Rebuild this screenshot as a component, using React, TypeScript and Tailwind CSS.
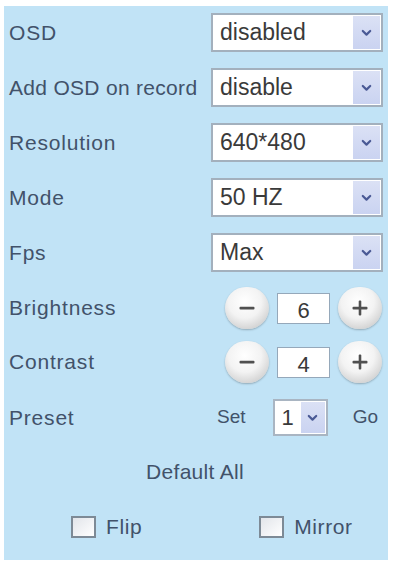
import React from 'react';

const font = { fontFamily: '"Liberation Sans", Arial, sans-serif' };

const Chevron = () => (
  <svg width="11" height="8" viewBox="0 0 11 8" fill="none">
    <path d="M1.8 2 L5.5 5.6 L9.2 2" stroke="#4a5a95" strokeWidth="2.2" strokeLinecap="round" strokeLinejoin="round" />
  </svg>
);

const Select = ({ value }: { value: string }) => (
  <div className="flex h-[39px] w-[172px] border-2 border-[#a3b0bd] bg-white">
    <div className="flex flex-1 items-center pl-[7px] text-[23px] text-[#3a3a3a]">{value}</div>
    <div className="my-[1px] mr-[1px] flex w-[27px] items-center justify-center bg-gradient-to-b from-[#dbe1f5] to-[#cad3f1]">
      <Chevron />
    </div>
  </div>
);

const RoundButton = ({ sign }: { sign: '-' | '+' }) => (
  <div className="flex h-[42px] w-[44px] items-center justify-center rounded-full bg-[radial-gradient(circle_at_45%_35%,#ffffff_0%,#f3f3f3_45%,#d2d2d2_78%,#b4b4b4_100%)] shadow-[0_1px_2px_rgba(0,0,0,0.25)]">
    <svg width="20" height="20" viewBox="0 0 20 20">
      <rect x="2.5" y="8.8" width="15" height="2.6" rx="1" fill="#505050" />
      {sign === '+' && <rect x="8.7" y="2.5" width="2.6" height="15" rx="1" fill="#505050" />}
    </svg>
  </div>
);

const Stepper = ({ value }: { value: string }) => (
  <div className="flex h-[42px] items-center gap-[8px]">
    <RoundButton sign="-" />
    <div className="flex h-[31px] w-[53px] items-end justify-center border border-[#95a8ba] bg-white pb-[1px] text-[22px] leading-none text-[#3a3a3a]">
      {value}
    </div>
    <RoundButton sign="+" />
  </div>
);

const Label = ({ children, wide = true }: { children: React.ReactNode; wide?: boolean }) => (
  <span className={`text-[21px] text-[#42526a] ${wide ? 'tracking-[0.8px]' : 'tracking-[0.3px]'}`}>{children}</span>
);

const Checkbox = ({ label }: { label: string }) => (
  <div className="flex items-center gap-[10px]">
    <div className="h-[22px] w-[25px] border-2 border-[#7d8a96] bg-gradient-to-br from-[#e2e5ea] to-[#ffffff]" />
    <span className="text-[21px] tracking-[0.6px] text-[#42526a]">{label}</span>
  </div>
);

export default function App() {
  const selects: [string, string, boolean][] = [
    ['OSD', 'disabled', true],
    ['Add OSD on record', 'disable', false],
    ['Resolution', '640*480', true],
    ['Mode', '50 HZ', true],
    ['Fps', 'Max', true],
  ];

  return (
    <div className="min-h-[565px] bg-white pt-[6px]" style={font}>
      <div className="ml-[4px] w-[384px] bg-[#c1e3f6] pb-[22px] pl-[5px] pr-[5px] pt-[7px]">
        <div className="flex flex-col gap-[16px]">
          {selects.map(([label, value, wide]) => (
            <div key={label} className="flex h-[39px] items-center justify-between">
              <Label wide={wide}>{label}</Label>
              <Select value={value} />
            </div>
          ))}
        </div>

        <div className="mt-[16px] flex h-[40px] items-center justify-between pr-[1px]">
          <Label>Brightness</Label>
          <Stepper value="6" />
        </div>
        <div className="mt-[14px] flex h-[40px] items-center justify-between pr-[1px]">
          <Label>Contrast</Label>
          <Stepper value="4" />
        </div>

        <div className="mt-[16px] flex h-[39px] items-center">
          <Label>Preset</Label>
          <div className="ml-auto flex items-center">
            <span className="text-[19px] text-[#42526a]">Set</span>
            <div className="ml-[27px] flex h-[37px] w-[55px] border-2 border-[#a9b5c2] bg-white">
              <div className="flex flex-1 items-center justify-center text-[22px] text-[#3a3a3a]">1</div>
              <div className="my-[1px] mr-[1px] flex w-[24px] items-center justify-center bg-gradient-to-b from-[#dbe1f5] to-[#cad3f1]">
                <Chevron />
              </div>
            </div>
            <span className="ml-[25px] mr-[5px] text-[19px] text-[#42526a]">Go</span>
          </div>
        </div>

        <div className="mt-[24px] flex h-[22px] items-center justify-center pr-[2px] text-[21px] tracking-[0.3px] text-[#42526a]">
          Default All
        </div>

        <div className="mt-[33px] flex h-[22px] items-center pl-[62px]">
          <Checkbox label="Flip" />
          <div className="ml-[117px]">
            <Checkbox label="Mirror" />
          </div>
        </div>
      </div>
    </div>
  );
}
